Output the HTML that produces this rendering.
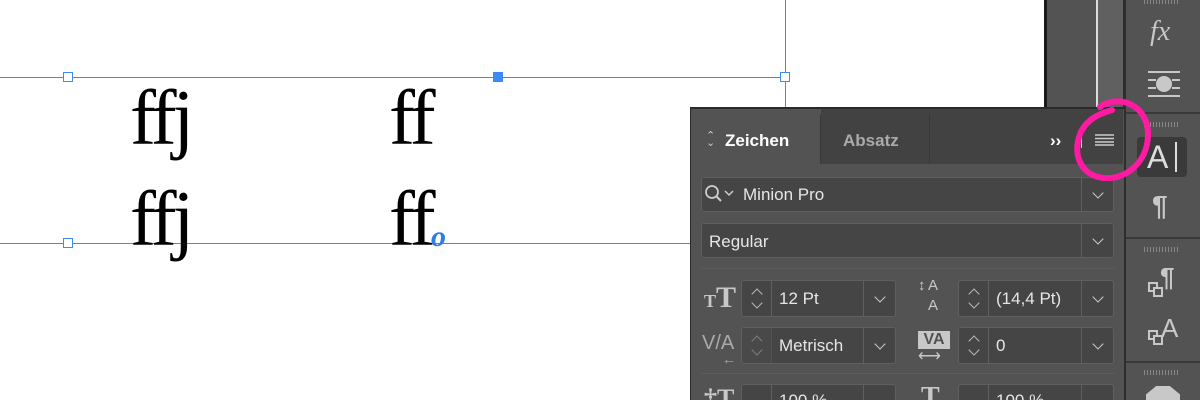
<!DOCTYPE html>
<html><head><meta charset="utf-8"><style>
*{margin:0;padding:0;box-sizing:border-box}
html,body{width:1200px;height:400px;overflow:hidden}
body{position:relative;background:#fff;font-family:"Liberation Sans",sans-serif}
.a{position:absolute}
.lig{position:absolute;font-family:"Liberation Serif",serif;font-size:78px;color:#000;line-height:1;letter-spacing:-4px}
.h{position:absolute;width:10px;height:10px;border:1px solid #3d8bf0;background:#fff}
.fld{position:absolute;background:#454545;border:1px solid #5f5f5f;border-radius:3px;overflow:hidden}
.dd{position:absolute;top:0;bottom:0;right:0;width:32px;border-left:1px solid #5f5f5f}
.chev{position:absolute;left:50%;top:50%;width:8px;height:8px;border-right:1.5px solid #ccc;border-bottom:1.5px solid #ccc;transform:translate(-50%,-75%) rotate(45deg)}
.t{position:absolute;color:#e6e6e6;font-size:17px}
.sp{position:absolute;top:0;bottom:0;left:0;width:30px;border-right:1px solid #5f5f5f}
.sp:before,.sp:after{content:"";position:absolute;left:11px;width:7px;height:7px;border-left:1.5px solid #bbb;border-top:1.5px solid #bbb}
.sp:before{top:9px;transform:rotate(45deg)}
.sp:after{bottom:9px;transform:rotate(-135deg)}
.ic{position:absolute;color:#c8c8c8}
</style></head><body>
<div class="a" style="left:0;top:77px;width:785px;height:1px;background:#3d8bf0"></div>
<div class="a" style="left:0;top:243px;width:691px;height:1px;background:#3d8bf0"></div>
<div class="a" style="left:785px;top:0;width:1px;height:77px;background:#a855f7"></div>
<div class="a" style="left:785px;top:77px;width:1px;height:31px;background:#3d8bf0"></div>
<div class="h" style="left:63px;top:72px"></div>
<div class="h" style="left:63px;top:238px"></div>
<div class="h" style="left:493px;top:72px;background:#3d8bf0"></div>
<div class="h" style="left:780px;top:72px"></div>
<div class="lig" style="left:130px;top:79px">ffj</div>
<div class="lig" style="left:389px;top:79px">ff</div>
<div class="lig" style="left:130px;top:180px">ffj</div>
<div class="lig" style="left:389px;top:180px">ff</div>
<div class="a" style="left:431px;top:222px;font-family:'Liberation Serif',serif;font-style:italic;font-weight:bold;color:#2f7de0;font-size:30px;line-height:1">o</div>
<div class="a" style="left:1044px;top:0;width:3px;height:400px;background:#1a1a1a"></div>
<div class="a" style="left:1047px;top:0;width:49px;height:400px;background:#535353"></div>
<div class="a" style="left:1096px;top:0;width:2px;height:400px;background:#ddd"></div>
<div class="a" style="left:1098px;top:0;width:25px;height:400px;background:#606060"></div>
<div class="a" style="left:1123px;top:0;width:3px;height:400px;background:#2e2e2e"></div>
<div class="a" style="left:1126px;top:0;width:74px;height:400px;background:#535353"></div>
<div class="a" style="left:1126px;top:112px;width:74px;height:2px;background:#3a3a3a"></div>
<div class="a" style="left:1126px;top:237px;width:74px;height:2px;background:#3a3a3a"></div>
<div class="a" style="left:1126px;top:361px;width:74px;height:2px;background:#3a3a3a"></div>
<div class="a" style="left:1144px;top:0;width:36px;height:4px;background:repeating-linear-gradient(90deg,#888 0 1px,transparent 1px 3px)"></div>
<div class="a" style="left:1144px;top:122px;width:36px;height:5px;background:repeating-linear-gradient(90deg,#888 0 1px,transparent 1px 3px)"></div>
<div class="a" style="left:1144px;top:247px;width:36px;height:5px;background:repeating-linear-gradient(90deg,#888 0 1px,transparent 1px 3px)"></div>
<div class="a" style="left:1144px;top:370px;width:36px;height:5px;background:repeating-linear-gradient(90deg,#888 0 1px,transparent 1px 3px)"></div>
<div class="ic" style="left:1150px;top:16px;font-family:'Liberation Serif',serif;font-style:italic;font-size:28px">fx</div>
<svg class="a" style="left:1148px;top:70px" width="32" height="28"><g stroke="#c8c8c8" stroke-width="2"><line x1="0" y1="2" x2="32" y2="2"/><line x1="0" y1="26" x2="32" y2="26"/><line x1="0" y1="10" x2="8" y2="10"/><line x1="24" y1="10" x2="32" y2="10"/><line x1="0" y1="18" x2="8" y2="18"/><line x1="24" y1="18" x2="32" y2="18"/></g><circle cx="16" cy="14" r="8" fill="#c8c8c8"/></svg>
<div class="a" style="left:1137px;top:137px;width:50px;height:40px;background:#3a3a3a;border-radius:4px"></div>
<div class="ic" style="left:1147px;top:139px;font-size:32px;color:#ddd">A</div>
<div class="a" style="left:1175px;top:142px;width:2px;height:30px;background:#ddd"></div>
<div class="ic" style="left:1152px;top:190px;font-size:28px;font-weight:bold">¶</div>
<div class="ic" style="left:1160px;top:262px;font-size:26px;font-weight:bold">¶</div>
<div class="a" style="left:1148px;top:282px;width:10px;height:10px;border:2px solid #c8c8c8"></div>
<div class="a" style="left:1153px;top:287px;width:10px;height:10px;border:2px solid #c8c8c8;background:#535353"></div>
<div class="ic" style="left:1161px;top:313px;font-size:26px">A</div>
<div class="a" style="left:1148px;top:330px;width:10px;height:10px;border:2px solid #c8c8c8"></div>
<div class="a" style="left:1153px;top:335px;width:10px;height:10px;border:2px solid #c8c8c8;background:#535353"></div>
<div class="a" style="left:1146px;top:386px;width:34px;height:14px;background:#c8c8c8;clip-path:polygon(30% 0,70% 0,100% 60%,100% 100%,0 100%,0 60%)"></div>
<div class="a" style="left:690px;top:107px;width:434px;height:293px;background:#535353;border-top:2px solid #2a2a2a;border-left:1px solid #2a2a2a"></div>
<div class="a" style="left:821px;top:109px;width:302px;height:55px;background:#424242"></div>
<div class="a" style="left:929px;top:114px;width:1px;height:50px;background:#383838"></div>
<div class="a" style="left:820px;top:115px;width:1px;height:49px;background:#383838"></div>
<div class="a" style="left:706px;top:133px;color:#ccc;font-size:11px;line-height:7px">⌃<br>⌄</div>
<div class="t" style="left:725px;top:131px;font-weight:bold;color:#fff">Zeichen</div>
<div class="t" style="left:843px;top:131px;font-weight:bold;color:#aaa">Absatz</div>
<div class="t" style="left:1050px;top:131px;font-weight:bold;color:#fff">››</div>
<div class="a" style="left:1081px;top:131px;width:1px;height:17px;background:#ccc"></div>
<svg class="a" style="left:1095px;top:134px" width="20" height="12"><g stroke="#ccc" stroke-width="1.5"><line x1="0" y1="1" x2="19" y2="1"/><line x1="0" y1="4.5" x2="19" y2="4.5"/><line x1="0" y1="8" x2="19" y2="8"/><line x1="0" y1="11" x2="19" y2="11"/></g></svg>
<div class="fld" style="left:701px;top:177px;width:413px;height:35px"><div class="dd"><div class="chev"></div></div></div>
<svg class="a" style="left:704px;top:184px" width="36" height="20"><circle cx="8" cy="8" r="6" stroke="#ccc" stroke-width="1.8" fill="none"/><line x1="12" y1="12" x2="17" y2="17" stroke="#ccc" stroke-width="2"/><polyline points="21,7 25,11 29,7" stroke="#ccc" stroke-width="1.5" fill="none"/></svg>
<div class="t" style="left:743px;top:185px">Minion Pro</div>
<div class="fld" style="left:701px;top:223px;width:413px;height:35px"><div class="dd"><div class="chev"></div></div></div>
<div class="t" style="left:709px;top:232px">Regular</div>
<div class="a" style="left:701px;top:268px;width:413px;height:1px;background:#5c5c5c"></div>
<div class="ic" style="left:704px;top:283px;font-family:'Liberation Serif',serif;font-weight:bold;font-size:30px;line-height:1"><span style="font-size:18px">T</span>T</div>
<div class="fld" style="left:741px;top:280px;width:155px;height:37px"><div class="sp"></div><div class="dd"><div class="chev"></div></div></div>
<div class="t" style="left:779px;top:289px">12 Pt</div>
<div class="ic" style="left:918px;top:279px;font-size:15px;line-height:14px;text-align:center">↕<span style="position:absolute;left:10px;top:0">A</span><span style="position:absolute;left:10px;top:20px">A</span></div>
<div class="fld" style="left:958px;top:280px;width:156px;height:37px"><div class="sp"></div><div class="dd"><div class="chev"></div></div></div>
<div class="t" style="left:996px;top:289px">(14,4 Pt)</div>
<div class="ic" style="left:702px;top:332px;font-size:20px;color:#aaa">V/A</div>
<div class="a" style="left:722px;top:352px;color:#aaa;font-size:14px;line-height:1">←</div>
<div class="fld" style="left:741px;top:327px;width:155px;height:37px"><div class="sp" style="background:#4e4e4e;opacity:.5"></div><div class="dd"><div class="chev"></div></div></div>
<div class="t" style="left:779px;top:336px">Metrisch</div>
<div class="a" style="left:918px;top:331px;width:32px;height:18px;background:#c8c8c8;color:#535353;font-weight:bold;font-size:16px;text-align:center;line-height:18px">VA</div>
<div class="a" style="left:918px;top:349px;color:#c8c8c8;font-size:16px;line-height:1">⟷</div>
<div class="fld" style="left:958px;top:327px;width:156px;height:37px"><div class="sp"></div><div class="dd"><div class="chev"></div></div></div>
<div class="t" style="left:996px;top:336px">0</div>
<div class="a" style="left:701px;top:373px;width:413px;height:1px;background:#5c5c5c"></div>
<div class="fld" style="left:741px;top:384px;width:155px;height:16px;border-bottom:none;border-radius:3px 3px 0 0"><div class="dd"></div><div style="position:absolute;left:0;top:0;width:30px;height:16px;border-right:1px solid #5f5f5f"></div><div style="position:absolute;left:37px;top:7px;color:#e6e6e6;font-size:17px;line-height:1">100 %</div></div>
<div class="fld" style="left:958px;top:384px;width:156px;height:16px;border-bottom:none;border-radius:3px 3px 0 0"><div class="dd"></div><div style="position:absolute;left:0;top:0;width:30px;height:16px;border-right:1px solid #5f5f5f"></div><div style="position:absolute;left:37px;top:7px;color:#e6e6e6;font-size:17px;line-height:1">100 %</div></div>
<div class="a" style="left:704px;top:386px;width:36px;height:14px;overflow:hidden;color:#c8c8c8;font-family:'Liberation Serif',serif;font-weight:bold;font-size:26px;line-height:1">‡T</div>
<div class="a" style="left:921px;top:384px;width:30px;height:16px;overflow:hidden;color:#c8c8c8;font-family:'Liberation Serif',serif;font-weight:bold;font-size:28px;line-height:1">T</div>
<svg class="a" style="left:1060px;top:88px" width="100" height="100"><path d="M40 19 C60 5 88 18 88 46 C88 74 66 92 44 90 C22 88 12 68 20 46 C26 32 38 26 52 22" stroke="#ff1aa3" stroke-width="6" fill="none" stroke-linecap="round"/></svg>
</body></html>
